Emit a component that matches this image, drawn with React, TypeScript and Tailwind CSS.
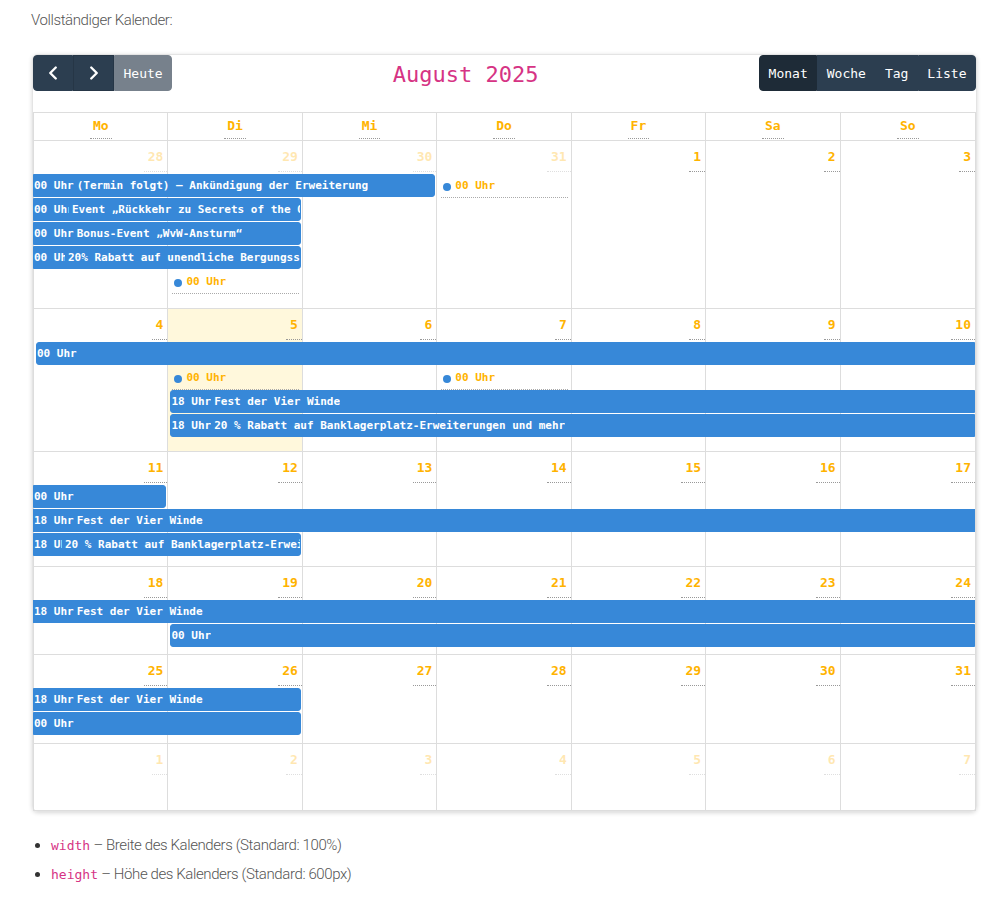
import React from 'react';

// Monatsansicht — statisches Abbild eines FullCalendar-Monats (August 2025)

type Bar = {
  kind: 'bar';
  col: number;
  span: number;
  lane: number;
  starts: boolean;
  ends: boolean;
  time: string;
  timeClass?: string;
  title: string;
};
type Dot = { kind: 'dot'; col: number; lane: number };
type Ev = Bar | Dot;

type Week = {
  days: number[];
  faded: boolean[];
  today?: number;
  rowClass: string;
  events: Ev[];
};

const FEST = 'Fest der Vier Winde';
const RABATT = '20 % Rabatt auf Banklagerplatz-Erweiterungen und mehr';

const WEEKS: Week[] = [
  {
    days: [28, 29, 30, 31, 1, 2, 3],
    faded: [true, true, true, true, false, false, false],
    rowClass: 'h-[168px] grid-rows-[33px_repeat(5,24px)_1fr]',
    events: [
      { kind: 'bar', col: 1, span: 3, lane: 1, starts: false, ends: true, time: '00 Uhr', title: '(Termin folgt) – Ankündigung der Erweiterung' },
      { kind: 'dot', col: 4, lane: 1 },
      { kind: 'bar', col: 1, span: 2, lane: 2, starts: false, ends: true, time: '00 Uhr', timeClass: 'w-[35px]', title: 'Event „Rückkehr zu Secrets of the Obscure“' },
      { kind: 'bar', col: 1, span: 2, lane: 3, starts: false, ends: true, time: '00 Uhr', title: 'Bonus-Event „WvW-Ansturm“' },
      { kind: 'bar', col: 1, span: 2, lane: 4, starts: false, ends: true, time: '00 Uhr', timeClass: 'w-[31px]', title: '20% Rabatt auf unendliche Bergungssäcke' },
      { kind: 'dot', col: 2, lane: 5 },
    ],
  },
  {
    days: [4, 5, 6, 7, 8, 9, 10],
    faded: [false, false, false, false, false, false, false],
    today: 2,
    rowClass: 'h-[143px] grid-rows-[33px_repeat(4,24px)_1fr]',
    events: [
      { kind: 'bar', col: 1, span: 7, lane: 1, starts: true, ends: false, time: '00 Uhr', title: '' },
      { kind: 'dot', col: 2, lane: 2 },
      { kind: 'dot', col: 4, lane: 2 },
      { kind: 'bar', col: 2, span: 6, lane: 3, starts: true, ends: false, time: '18 Uhr', title: FEST },
      { kind: 'bar', col: 2, span: 6, lane: 4, starts: true, ends: false, time: '18 Uhr', title: RABATT },
    ],
  },
  {
    days: [11, 12, 13, 14, 15, 16, 17],
    faded: [false, false, false, false, false, false, false],
    rowClass: 'h-[115px] grid-rows-[33px_repeat(3,24px)_1fr]',
    events: [
      { kind: 'bar', col: 1, span: 1, lane: 1, starts: false, ends: true, time: '00 Uhr', title: '' },
      { kind: 'bar', col: 1, span: 7, lane: 2, starts: false, ends: false, time: '18 Uhr', title: FEST },
      { kind: 'bar', col: 1, span: 2, lane: 3, starts: false, ends: true, time: '18 Uhr', timeClass: 'w-[28px]', title: RABATT },
    ],
  },
  {
    days: [18, 19, 20, 21, 22, 23, 24],
    faded: [false, false, false, false, false, false, false],
    rowClass: 'h-[88px] grid-rows-[33px_repeat(2,24px)_1fr]',
    events: [
      { kind: 'bar', col: 1, span: 7, lane: 1, starts: false, ends: false, time: '18 Uhr', title: FEST },
      { kind: 'bar', col: 2, span: 6, lane: 2, starts: true, ends: false, time: '00 Uhr', title: '' },
    ],
  },
  {
    days: [25, 26, 27, 28, 29, 30, 31],
    faded: [false, false, false, false, false, false, false],
    rowClass: 'h-[89px] grid-rows-[33px_repeat(2,24px)_1fr]',
    events: [
      { kind: 'bar', col: 1, span: 2, lane: 1, starts: false, ends: true, time: '18 Uhr', title: FEST },
      { kind: 'bar', col: 1, span: 2, lane: 2, starts: false, ends: true, time: '00 Uhr', title: '' },
    ],
  },
  {
    days: [1, 2, 3, 4, 5, 6, 7],
    faded: [true, true, true, true, true, true, true],
    rowClass: 'h-[67px] grid-rows-[33px_1fr]',
    events: [],
  },
];

const DAY_NAMES = ['Mo', 'Di', 'Mi', 'Do', 'Fr', 'Sa', 'So'];

const Chevron: React.FC<{ dir: 'l' | 'r' }> = ({ dir }) => (
  <svg width="22" height="22" viewBox="0 0 24 24" fill="none" stroke="white" strokeWidth="2.6"
    strokeLinecap="round" strokeLinejoin="round">
    <polyline points={dir === 'l' ? '15 18 9 12 15 6' : '9 18 15 12 9 6'} />
  </svg>
);

const EventBar: React.FC<{ ev: Bar }> = ({ ev }) => (
  <div
    className={[
      'self-start min-w-0 h-[23px] flex items-center overflow-hidden whitespace-nowrap bg-[#3788d8] border border-[#3788d8] text-white font-bold text-[11px] leading-[14px]',
      ev.starts ? 'ml-[2px] rounded-l-[3px]' : '-ml-[1px]',
      ev.ends ? 'mr-[2px] rounded-r-[3px]' : '',
    ].join(' ')}
    style={{ gridColumn: `${ev.col} / span ${ev.span}`, gridRow: ev.lane + 1 }}
  >
    <span className={`shrink-0 overflow-hidden mr-[3px] ${ev.timeClass ?? ''}`}>{ev.time}</span>
    <span className="min-w-0 overflow-hidden">{ev.title}</span>
  </div>
);

const DotEvent: React.FC<{ ev: Dot }> = ({ ev }) => (
  <div
    className="self-start min-w-0 h-[24px] pt-[2px] mx-[4px] flex items-center border-b border-dotted border-[#aaa] text-[11px] font-bold text-[#ffb300]"
    style={{ gridColumn: `${ev.col}`, gridRow: ev.lane + 1 }}
  >
    <span className="w-[8px] h-[8px] rounded-full bg-[#3788d8] ml-[2px] mr-[4px]" />
    <span>00 Uhr</span>
  </div>
);

const WeekRow: React.FC<{ week: Week }> = ({ week }) => (
  <div className={`grid grid-cols-7 border-l border-r border-b border-[#ddd] ${week.rowClass}`}>
    {week.days.map((d, i) => (
      <div
        key={i}
        className={[
          'flex justify-end items-start',
          i < 6 ? 'border-r border-[#ddd]' : '',
          week.today === i + 1 ? 'bg-[#fff8dc]' : '',
        ].join(' ')}
        style={{ gridColumn: `${i + 1}`, gridRow: '1 / -1' }}
      >
        <span
          className={`pt-[8px] pb-[6px] px-[4px] border-b border-dotted border-[#999] text-[13px] leading-[16px] font-bold text-[#ffb300] ${
            week.faded[i] ? 'opacity-30' : ''
          }`}
        >
          {d}
        </span>
      </div>
    ))}
    {week.events.map((ev, i) =>
      ev.kind === 'bar' ? <EventBar key={`e${i}`} ev={ev} /> : <DotEvent key={`e${i}`} ev={ev} />,
    )}
  </div>
);

export default function App() {
  return (
    <div className="min-h-screen bg-white pl-[31px] pt-[10px] font-['Roboto',sans-serif] font-light tracking-[-0.4px] text-[#555]">
      <p className="text-[15px] leading-[20px]">Vollständiger Kalender:</p>

      <div className="mt-[24px] ml-[1px] w-[945px] rounded-[6px] border border-[#e4e4e4] shadow-[0_1px_4px_rgba(0,0,0,0.16)] font-['DejaVu_Sans_Mono',monospace] font-normal tracking-normal">
        {/* Toolbar */}
        <div className="flex justify-between items-center h-[36px] mb-[21px]">
          <div className="flex h-[36px]">
            <button className="w-[40px] flex items-center justify-center bg-[#2c3e50] border border-[#2c3e50] rounded-l-[4px]">
              <Chevron dir="l" />
            </button>
            <button className="w-[41px] flex items-center justify-center bg-[#2c3e50] border border-[#263646]">
              <Chevron dir="r" />
            </button>
            <button className="px-[8.5px] pt-[1px] bg-[#77818c] border border-[#77818c] rounded-r-[4px] text-white text-[13px]">
              Heute
            </button>
          </div>
          <h2 className="mt-[3px] text-[22px] leading-[28px] text-[#d63384]">August 2025</h2>
          <div className="flex h-[36px] text-white text-[13px]">
            <button className="px-[8.5px] pt-[1px] bg-[#1e2b37] border border-[#1e2b37] rounded-l-[4px]">Monat</button>
            <button className="px-[8.5px] pt-[1px] bg-[#2c3e50] border border-[#2c3e50]">Woche</button>
            <button className="px-[8.5px] pt-[1px] bg-[#2c3e50] border border-[#2c3e50]">Tag</button>
            <button className="px-[8.5px] pt-[1px] bg-[#2c3e50] border border-[#2c3e50] rounded-r-[4px]">Liste</button>
          </div>
        </div>

        {/* Weekday header */}
        <div className="grid grid-cols-7 h-[29px] border border-[#ddd]">
          {DAY_NAMES.map((n, i) => (
            <div key={n} className={`flex justify-center items-start ${i < 6 ? 'border-r border-[#ddd]' : ''}`}>
              <span className="mt-[5px] px-[3px] pb-[4px] border-b border-dotted border-[#999] text-[13px] leading-[16px] font-bold text-[#ffb300]">
                {n}
              </span>
            </div>
          ))}
        </div>

        {WEEKS.map((w, i) => (
          <WeekRow key={i} week={w} />
        ))}
      </div>

      <ul className="mt-[19px] list-disc pl-[20px] text-[15px] leading-[28px] marker:text-[#333]">
        <li>
          <code className="font-['DejaVu_Sans_Mono',monospace] tracking-normal text-[13px] text-[#d63384]">width</code> – Breite des Kalenders (Standard: 100%)
        </li>
        <li>
          <code className="font-['DejaVu_Sans_Mono',monospace] tracking-normal text-[13px] text-[#d63384]">height</code> – Höhe des Kalenders (Standard: 600px)
        </li>
      </ul>
    </div>
  );
}
